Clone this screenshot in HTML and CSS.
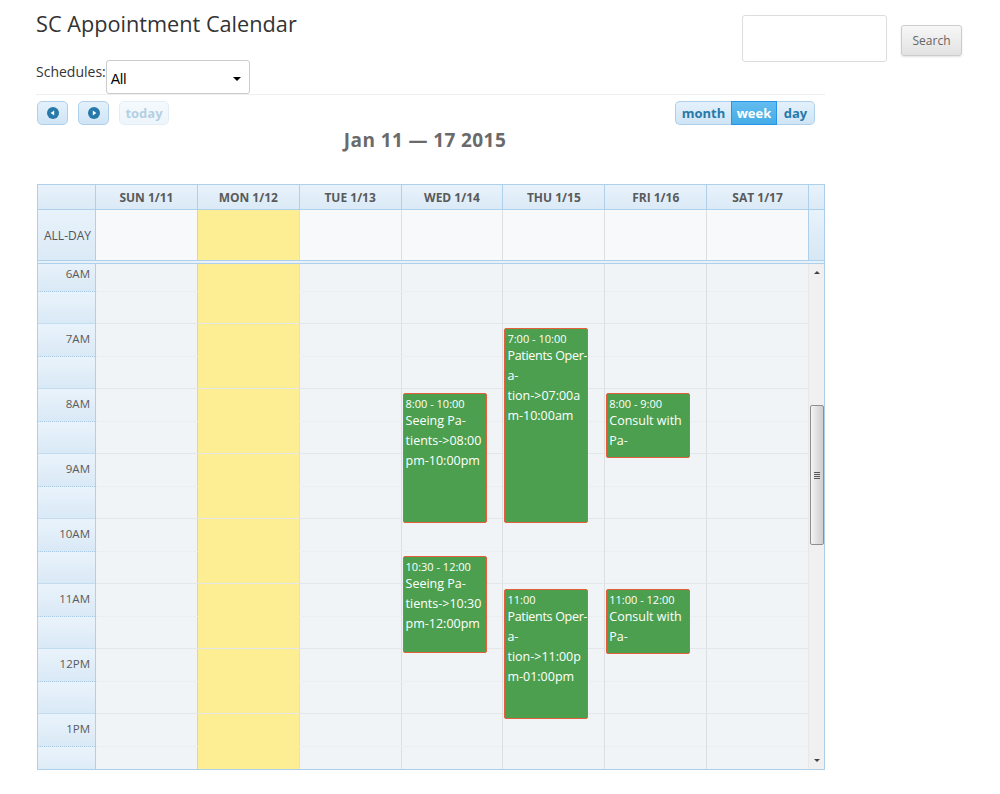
FILE: index.html
```html
<!DOCTYPE html>
<html>
<head>
<meta charset="utf-8">
<title>SC Appointment Calendar</title>
<link rel="stylesheet" href="styles.css">
</head>
<body>
<div class="page">
  <div class="top">
    <div class="top-left">
      <h1 class="title">SC Appointment Calendar</h1>
      <div class="sched">
        <span class="sched-label">Schedules:</span>
        <div class="select"><span>All</span><span class="caret"></span></div>
      </div>
    </div>
    <div class="search">
      <div class="search-input"></div>
      <div class="search-btn">Search</div>
    </div>
  </div>
  <div class="rule"></div>

  <div class="cal">
    <div class="toolbar">
      <div class="tb-left">
        <div class="btn icon-btn"><svg width="12" height="12" viewBox="0 0 12 12"><circle cx="6" cy="6" r="6" fill="#2779aa"/><path d="M3.6 6 L7.2 3.6 V8.4 Z" fill="#fff"/></svg></div>
        <div class="btn icon-btn"><svg width="12" height="12" viewBox="0 0 12 12"><circle cx="6" cy="6" r="6" fill="#2779aa"/><path d="M8.4 6 L4.8 3.6 V8.4 Z" fill="#fff"/></svg></div>
        <div class="btn btn-disabled">today</div>
      </div>
      <div class="tb-right">
        <div class="seg seg-first">month</div>
        <div class="seg seg-active">week</div>
        <div class="seg seg-last">day</div>
      </div>
    </div>
    <div class="range">Jan 11 — 17 2015</div>

    <div class="grid">
      <div class="row head">
        <div class="hc hc-axis"></div>
        <div class="hc">SUN 1/11</div>
        <div class="hc">MON 1/12</div>
        <div class="hc">TUE 1/13</div>
        <div class="hc">WED 1/14</div>
        <div class="hc">THU 1/15</div>
        <div class="hc">FRI 1/16</div>
        <div class="hc">SAT 1/17</div>
        <div class="hc hc-gutter"></div>
      </div>
      <div class="row allday">
        <div class="ad-axis">ALL-DAY</div>
        <div class="ad first"></div>
        <div class="ad today"></div>
        <div class="ad"></div>
        <div class="ad"></div>
        <div class="ad"></div>
        <div class="ad"></div>
        <div class="ad"></div>
        <div class="ad-gutter"></div>
      </div>
      <div class="divider"></div>
      <div class="body">
        <div class="viewport">
          <div class="slots">
            <div class="col c2 first"></div>
            <div class="col c3 today"></div>
            <div class="col c4"></div>
            <div class="col c5"></div>
            <div class="col c6"></div>
            <div class="col c7"></div>
            <div class="col c8"></div>

            <div class="ax hour r1">6AM</div><div class="ln hour r1"></div>
            <div class="ax half r2"></div><div class="ln half r2"></div>
            <div class="ax hour r3">7AM</div><div class="ln hour r3"></div>
            <div class="ax half r4"></div><div class="ln half r4"></div>
            <div class="ax hour r5">8AM</div><div class="ln hour r5"></div>
            <div class="ax half r6"></div><div class="ln half r6"></div>
            <div class="ax hour r7">9AM</div><div class="ln hour r7"></div>
            <div class="ax half r8"></div><div class="ln half r8"></div>
            <div class="ax hour r9">10AM</div><div class="ln hour r9"></div>
            <div class="ax half r10"></div><div class="ln half r10"></div>
            <div class="ax hour r11">11AM</div><div class="ln hour r11"></div>
            <div class="ax half r12"></div><div class="ln half r12"></div>
            <div class="ax hour r13">12PM</div><div class="ln hour r13"></div>
            <div class="ax half r14"></div><div class="ln half r14"></div>
            <div class="ax hour r15">1PM</div><div class="ln hour r15"></div>
            <div class="ax half r16"></div><div class="ln half r16"></div>

            <div class="evcol c5">
              <div class="ev" style="top:135px;height:130px">
                <div class="ev-time">8:00 - 10:00</div>
                <div class="ev-title"><span>Seeing Pa-</span><span>tients-&gt;08:00</span><span>pm-10:00pm</span></div>
              </div>
              <div class="ev" style="top:298px;height:97px">
                <div class="ev-time">10:30 - 12:00</div>
                <div class="ev-title"><span>Seeing Pa-</span><span>tients-&gt;10:30</span><span>pm-12:00pm</span></div>
              </div>
            </div>
            <div class="evcol c6">
              <div class="ev" style="top:70px;height:195px">
                <div class="ev-time">7:00 - 10:00</div>
                <div class="ev-title"><span>Patients Oper-</span><span>a-</span><span>tion-&gt;07:00a</span><span>m-10:00am</span></div>
              </div>
              <div class="ev" style="top:331px;height:130px">
                <div class="ev-time">11:00</div>
                <div class="ev-title"><span>Patients Oper-</span><span>a-</span><span>tion-&gt;11:00p</span><span>m-01:00pm</span></div>
              </div>
            </div>
            <div class="evcol c7">
              <div class="ev" style="top:135px;height:65px">
                <div class="ev-time">8:00 - 9:00</div>
                <div class="ev-title"><span>Consult with</span><span>Pa-</span></div>
              </div>
              <div class="ev" style="top:331px;height:65px">
                <div class="ev-time">11:00 - 12:00</div>
                <div class="ev-title"><span>Consult with</span><span>Pa-</span></div>
              </div>
            </div>
          </div>
        </div>
        <div class="scrollbar">
          <div class="sb-btn"><span class="arr-up"></span></div>
          <div class="sb-track"><div class="thumb"><span class="grip"></span></div></div>
          <div class="sb-btn"><span class="arr-down"></span></div>
        </div>
      </div>
    </div>
  </div>
</div>
</body>
</html>
```

FILE: styles.css
```css
* { box-sizing: border-box; }
html, body { margin: 0; padding: 0; background: #fff; }
body { font-family: "Open Sans", "Liberation Sans", sans-serif; color: #333; }

.page { padding-left: 36px; }

.top { display: flex; justify-content: space-between; width: 926px; }
.title { margin: 0; padding-top: 9px; font-size: 21.7px; font-weight: 400; line-height: 30px; color: #333; }
.sched { display: flex; align-items: flex-start; margin-top: 21px; }
.sched-label { font-size: 14px; line-height: 20px; margin-top: 2px; color: #333; }
.select { width: 144px; height: 34px; border: 1px solid #ccc; border-radius: 3px; display: flex; align-items: center; justify-content: space-between; padding: 4px 8px 0 4px; font-family: "Liberation Sans", Arial, sans-serif; font-size: 14px; color: #000; background: #fff; }
.caret { width: 0; height: 0; border-left: 4px solid transparent; border-right: 4px solid transparent; border-top: 4px solid #000; }

.search { display: flex; align-items: flex-start; padding-top: 15px; }
.search-input { width: 145px; height: 47px; border: 1px solid #ddd; border-radius: 3px; background: #fff; }
.search-btn { margin-left: 14px; margin-top: 10px; width: 61px; height: 31px; border: 1px solid #ccc; border-radius: 3px; background: linear-gradient(#f7f7f7, #e2e2e2); box-shadow: 0 1px 2px rgba(0,0,0,.12); font-size: 12px; color: #666; display: flex; align-items: center; justify-content: center; }

.rule { width: 789px; border-top: 1px solid #eee; margin-top: 0; }

.cal { margin-left: 1px; width: 788px; }

.toolbar { display: flex; justify-content: space-between; margin-top: 6px; height: 24px; }
.tb-left { display: flex; gap: 10px; }
.btn { height: 24px; border: 1px solid #aed0ea; border-radius: 5px; background: linear-gradient(#e4f1fb, #cfe4f5); display: flex; align-items: center; justify-content: center; font-size: 13px; font-weight: 700; color: #2779aa; }
.icon-btn { width: 31px; }
.btn-disabled { width: 50px; opacity: .35; }
.tb-right { display: flex; margin-right: 10px; }
.seg { height: 24px; border: 1px solid #aed0ea; background: linear-gradient(#e4f1fb, #cfe4f5); font-size: 13px; font-weight: 700; color: #2779aa; display: flex; align-items: center; justify-content: center; }
.seg-first { width: 56px; border-radius: 5px 0 0 5px; border-right: none; }
.seg-active { width: 46px; background: linear-gradient(#62bcef, #45ace6); border-color: #2694e8; color: #fff; }
.seg-last { width: 38px; border-radius: 0 5px 5px 0; border-left: none; }

.range { text-align: center; padding-right: 12px; margin-top: 2px; font-size: 19px; letter-spacing: 0.4px; font-weight: 700; line-height: 26px; color: #6a6a6a; }

.grid { margin-top: 31px; border: 1px solid #aed0ea; width: 788px; background: #fff; }
.row { display: grid; grid-template-columns: 57px repeat(7, 1fr) 16px; }
.head { height: 25px; border-bottom: 1px solid #aed0ea; }
.hc { background: linear-gradient(#e8f2fb, #dbeaf7); border-left: 1px solid #aed0ea; font-size: 12px; font-weight: 700; color: #5a5a5a; display: flex; align-items: center; justify-content: center; }
.hc-axis { border-left: none; }

.allday { height: 50px; }
.ad-axis { background: linear-gradient(#e8f2fb, #dbeaf7); font-size: 12px; color: #555; display: flex; align-items: center; justify-content: flex-end; padding-right: 4px; }
.ad { background: #f8f9fb; border-left: 1px solid #dedede; }
.ad.first { border-left-color: #aed0ea; }
.ad.today { background: #fdee93; border-left-color: #f6d94e; }
.ad-gutter { background: linear-gradient(#e8f2fb, #d6e7f5); border-left: 1px solid #aed0ea; }

.divider { height: 4px; border-top: 1px solid #aed0ea; border-bottom: 1px solid #aed0ea; background: #e6f1fa; }

.body { display: flex; height: 505px; }
.viewport { flex: 1; overflow: hidden; }
.slots { display: grid; grid-template-columns: 57px repeat(7, 1fr); grid-template-rows: repeat(8, 33px 32px); margin-top: -6px; }

.col { grid-row: 1 / -1; background: #f1f4f7; border-left: 1px solid #dcdfe2; }
.col.first { border-left-color: #aed0ea; }
.col.today { background: #fdee93; border-left-color: #f6d94e; }
.c2 { grid-column: 2; } .c3 { grid-column: 3; } .c4 { grid-column: 4; } .c5 { grid-column: 5; }
.c6 { grid-column: 6; } .c7 { grid-column: 7; } .c8 { grid-column: 8; }

.r1 { grid-row: 1; } .r2 { grid-row: 2; } .r3 { grid-row: 3; } .r4 { grid-row: 4; }
.r5 { grid-row: 5; } .r6 { grid-row: 6; } .r7 { grid-row: 7; } .r8 { grid-row: 8; }
.r9 { grid-row: 9; } .r10 { grid-row: 10; } .r11 { grid-row: 11; } .r12 { grid-row: 12; }
.r13 { grid-row: 13; } .r14 { grid-row: 14; } .r15 { grid-row: 15; } .r16 { grid-row: 16; }

.ax { grid-column: 1; background: linear-gradient(#eaf3fb, #d9e9f6); font-size: 11.5px; color: #5a5a5a; text-align: right; padding-right: 5px; line-height: 30px; }
.ax.hour { border-top: 1px solid #c3dcef; }
.ax.half { border-top: 1px dotted #a9cbe6; }
.ln { grid-column: 2 / -1; margin-left: 1px; }
.ln.hour { border-top: 1px solid #e4e6e9; }
.ln.half { border-top: 1px dotted #e7e9ec; }

.evcol { grid-row: 1 / -1; position: relative; }
.ev { position: absolute; left: 2px; width: 84px; background: #4c9f4f; border: 1px solid #e5603a; border-radius: 2px; color: #fff; padding: 2px 0 0 2px; overflow: hidden; }
.ev-time { font-size: 11px; line-height: 15px; white-space: nowrap; }
.ev-title { font-size: 12.5px; line-height: 20px; }
.ev-title span { display: block; white-space: nowrap; }
.evcol.c6 .ev-title span:first-child { letter-spacing: -0.3px; }

.scrollbar { width: 16px; background: #f0f0f0; border-left: 1px solid #e8e8e8; display: flex; flex-direction: column; }
.sb-btn { height: 17px; display: flex; align-items: center; justify-content: center; }
.arr-up { width: 0; height: 0; border-left: 3px solid transparent; border-right: 3px solid transparent; border-bottom: 3px solid #444; }
.arr-down { width: 0; height: 0; border-left: 3px solid transparent; border-right: 3px solid transparent; border-top: 3px solid #444; }
.sb-track { flex: 1; }
.thumb { margin-top: 124px; margin-left: 1px; width: 14px; height: 140px; border: 1px solid #8e8e8e; border-radius: 2px; background: linear-gradient(90deg, #f4f4f4, #dcdcdc 60%, #cfcfcf); display: flex; align-items: center; justify-content: center; }
.grip { width: 6px; height: 7px; background: repeating-linear-gradient(#555 0 1px, transparent 1px 2px); }
```
